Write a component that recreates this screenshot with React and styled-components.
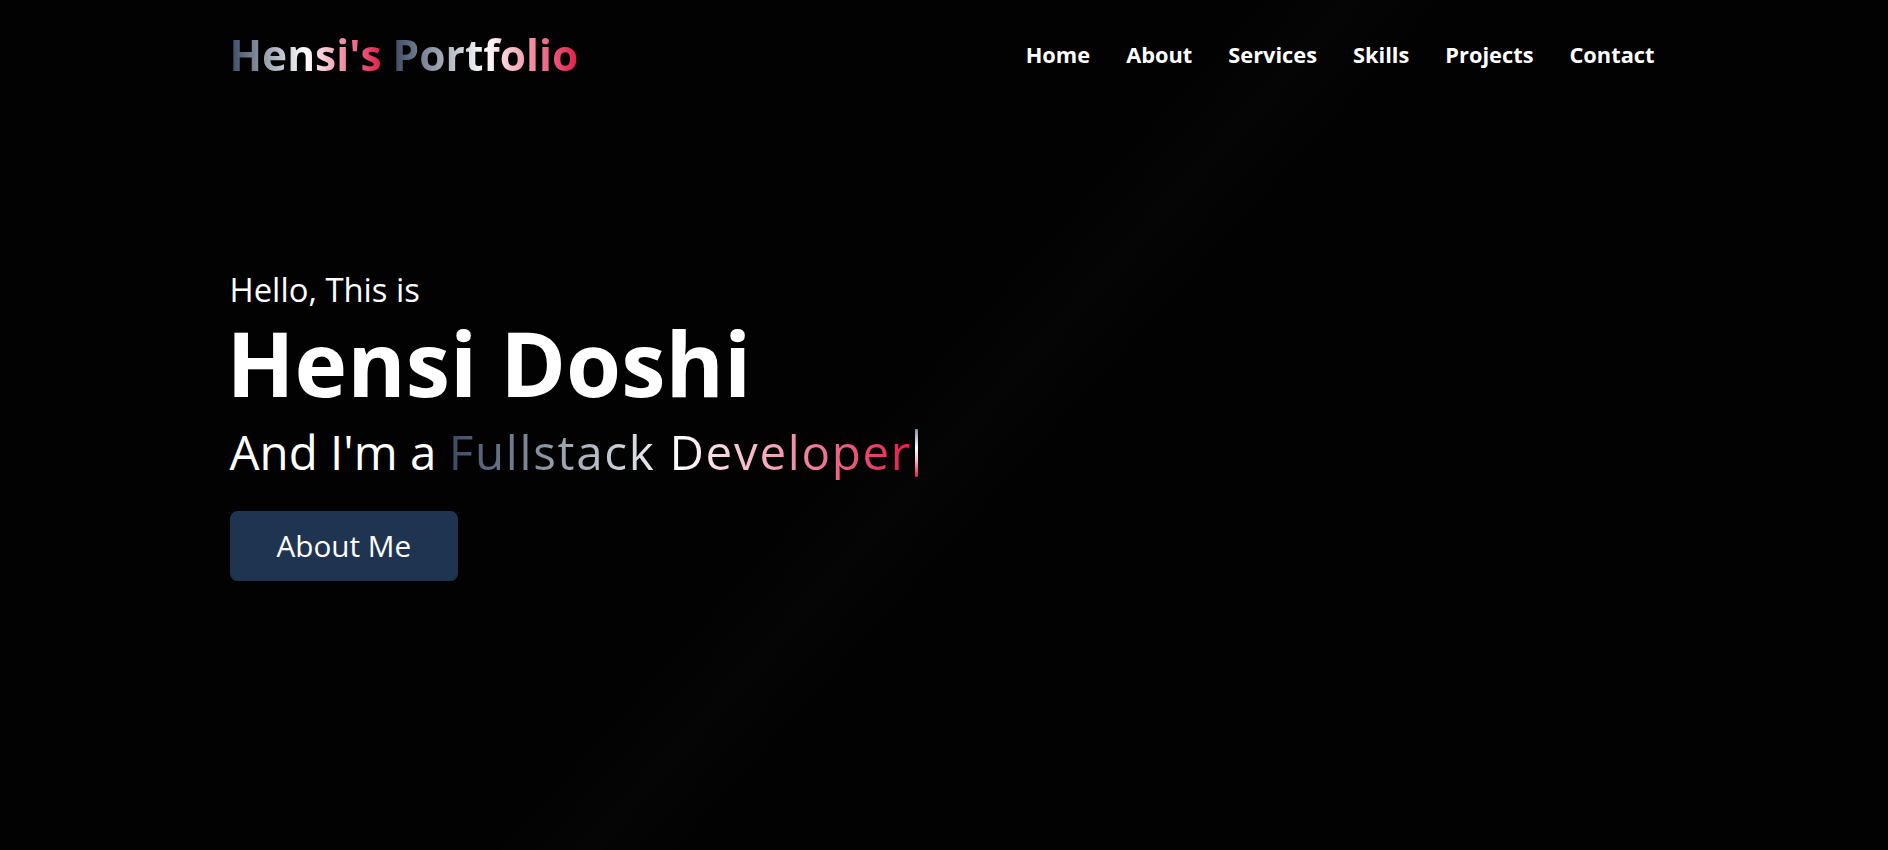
import React from "react";
import styled, { createGlobalStyle } from "styled-components";

const GlobalStyle = createGlobalStyle`
  * { box-sizing: border-box; }
  html, body { margin: 0; padding: 0; }
  body {
    background: #020202;
    color: #fff;
    font-family: "Open Sans", "Noto Sans", "Liberation Sans", sans-serif;
  }
`;

const gradient = "linear-gradient(90deg, #3b4a63 0%, #ffffff 50%, #e11d48 100%)";

const Page = styled.div`
  min-height: 100vh;
  display: flex;
  flex-direction: column;
  background:
    linear-gradient(132deg, transparent 47%, rgba(255,255,255,0.012) 51%, transparent 55%),
    #020202;
`;

const Container = styled.div`
  width: 100%;
  max-width: 1625px;
  margin: 0 auto;
  padding: 0 102px 0 98px;
`;

const Header = styled.header`
  padding: 30px 0;
`;

const NavBar = styled(Container)`
  display: flex;
  align-items: center;
  justify-content: space-between;
`;

const Logo = styled.a`
  display: flex;
  gap: 11px;
  font-size: 42.5px;
  line-height: 50px;
  font-weight: 700;
  text-decoration: none;
`;

const GradientWord = styled.span`
  background: ${gradient};
  -webkit-background-clip: text;
  background-clip: text;
  color: transparent;
  letter-spacing: ${(p) => p.$spacing || "normal"};
  margin-right: ${(p) => (p.$spacing ? `-${p.$spacing}` : "0")};
`;

const Menu = styled.ul`
  display: flex;
  gap: 36px;
  list-style: none;
  margin: 0;
  padding: 0;
`;

const MenuLink = styled.a`
  display: block;
  color: #fff;
  text-decoration: none;
  font-size: 21.8px;
  line-height: 26px;
  font-weight: 700;
`;

const Hero = styled.section`
  flex: 1;
  display: flex;
  align-items: center;
  padding-bottom: 110px;
`;

const HeroContent = styled.div`
  display: flex;
  flex-direction: column;
  align-items: flex-start;
`;

const Greeting = styled.div`
  font-size: 32.8px;
  line-height: 39px;
  font-weight: 400;
`;

const Name = styled.h1`
  margin: 0 0 0 -3px;
  font-size: 89px;
  line-height: 108px;
  font-weight: 700;
`;

const Role = styled.div`
  margin: 6px 0;
  font-size: 47.5px;
  line-height: 57px;
  font-weight: 400;
  display: flex;
  align-items: baseline;
  white-space: pre;
`;

const Cursor = styled.span`
  display: block;
  align-self: flex-end;
  width: 3px;
  height: 48px;
  margin: 0 0 3px 5px;
  border-radius: 1px;
  background: linear-gradient(180deg, #8391a7 0%, #ffffff 40%, #fbb6c8 66%, #e11d48 100%);
`;

const Button = styled.a`
  display: inline-block;
  margin-top: 25px;
  padding: 15px 45px;
  background: #1f3450;
  border: 2.5px solid #1f3450;
  border-radius: 7.5px;
  color: #fff;
  font-size: 29.7px;
  line-height: 36px;
  font-weight: 400;
  text-decoration: none;
`;

const links = ["Home", "About", "Services", "Skills", "Projects", "Contact"];

export default function App() {
  return (
    <>
      <GlobalStyle />
      <Page>
        <Header>
          <NavBar>
            <Logo href="#">
              <GradientWord>Hensi's</GradientWord>
              <GradientWord>Portfolio</GradientWord>
            </Logo>
            <Menu>
              {links.map((l) => (
                <li key={l}>
                  <MenuLink href="#">{l}</MenuLink>
                </li>
              ))}
            </Menu>
          </NavBar>
        </Header>
        <Hero>
          <Container>
            <HeroContent>
              <Greeting>Hello, This is</Greeting>
              <Name>Hensi Doshi</Name>
              <Role>
                {"And I'm a "}
                <GradientWord $spacing="1.7px">Fullstack Developer</GradientWord>
                <Cursor aria-hidden="true" />
              </Role>
              <Button href="#">About Me</Button>
            </HeroContent>
          </Container>
        </Hero>
      </Page>
    </>
  );
}
